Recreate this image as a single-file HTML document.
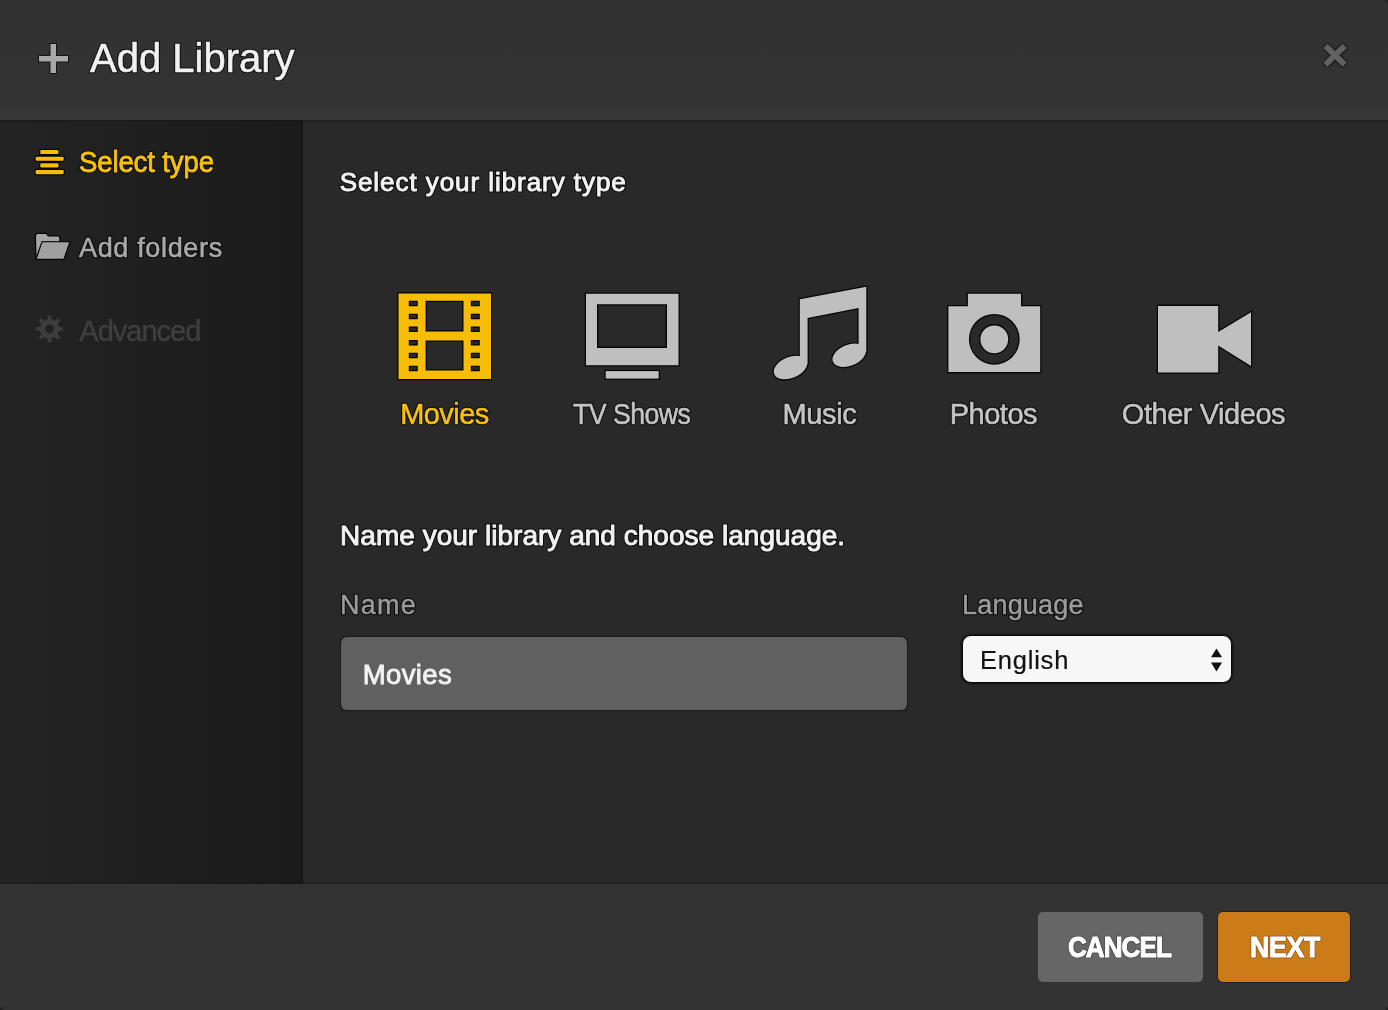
<!DOCTYPE html>
<html>
<head>
<meta charset="utf-8">
<style>
html,body{margin:0;padding:0;width:1388px;height:1010px;overflow:hidden;background:#292929;}
body{position:relative;font-family:"Liberation Sans",sans-serif;}
.abs{position:absolute;white-space:nowrap;line-height:1;}
#header{position:absolute;left:0;top:0;width:1388px;height:120px;background:linear-gradient(#323232 0%,#333 85%,#363636 95%,#363636 100%);}
#hline{position:absolute;left:0;top:120px;width:1388px;height:2px;background:rgba(0,0,0,.15);}
#sidebar{position:absolute;left:0;top:120px;width:303px;height:764px;background:linear-gradient(90deg,#242424 0%,#202020 40%,#1b1b1b 100%);}
#sline{position:absolute;left:301px;top:120px;width:2px;height:764px;background:rgba(0,0,0,.12);}
#main{position:absolute;left:303px;top:120px;width:1085px;height:764px;background:#292929;}
#footer{position:absolute;left:0;top:884px;width:1388px;height:126px;background:#333333;}
#fline{position:absolute;left:0;top:882px;width:1388px;height:2px;background:rgba(0,0,0,.15);}
.sh{text-shadow:0 0 1px #000,0 0 1px #000,0 0 2px rgba(0,0,0,.7);}
</style>
</head>
<body>
<div id="header"></div>
<div id="sidebar"></div>
<div id="main"></div>
<div id="footer"></div>
<div id="hline"></div>
<div id="sline"></div>
<div id="fline"></div>

<svg class="abs" style="left:0;top:0" width="1388" height="1010">
  <defs>
    <filter id="ol" x="-10%" y="-10%" width="120%" height="120%">
      <feMorphology in="SourceAlpha" operator="dilate" radius="1.3" result="d"/>
      <feGaussianBlur in="d" stdDeviation="0.5" result="db"/>
      <feFlood flood-color="#000" flood-opacity="0.85"/>
      <feComposite in2="db" operator="in" result="s"/>
      <feMerge><feMergeNode in="s"/><feMergeNode in="SourceGraphic"/></feMerge>
    </filter>
    <filter id="ol2" x="-20%" y="-20%" width="140%" height="140%">
      <feMorphology in="SourceAlpha" operator="dilate" radius="1" result="d"/>
      <feGaussianBlur in="d" stdDeviation="1" result="db"/>
      <feFlood flood-color="#000" flood-opacity="0.45"/>
      <feComposite in2="db" operator="in" result="s"/>
      <feMerge><feMergeNode in="s"/><feMergeNode in="SourceGraphic"/></feMerge>
    </filter>
    <filter id="gb" x="-30%" y="-30%" width="160%" height="160%">
      <feGaussianBlur in="SourceGraphic" stdDeviation="0.6"/>
    </filter>
  </defs>
  <!-- plus -->
  <g stroke="#000" stroke-opacity="0.6" stroke-width="2" paint-order="stroke" fill="#a8a8a8">
  <path d="M50.5 44 H56 V56 H68 V61.5 H56 V73 H50.5 V61.5 H39 V56 H50.5 Z"/>
  </g>
  <!-- close -->
  <g stroke="#626262" stroke-width="5.4" filter="url(#ol2)">
    <line x1="1325.5" y1="46" x2="1344.5" y2="64.5"/>
    <line x1="1344.5" y1="46" x2="1325.5" y2="64.5"/>
  </g>
  <!-- sidebar icons -->
  <g fill="#f7bc05" stroke="#000" stroke-opacity="0.85" stroke-width="2.6" paint-order="stroke">
    <rect x="40.3" y="150" width="18.2" height="4.1" rx="1.2"/>
    <rect x="35.6" y="156.7" width="28.1" height="4.1" rx="1.2"/>
    <rect x="40.3" y="163.3" width="18.2" height="4.1" rx="1.2"/>
    <rect x="35.6" y="170.1" width="28.1" height="4.2" rx="1.2"/>
  </g>
  <g fill="#a6a6a6" stroke="#000" stroke-opacity="0.85" stroke-width="2.6" paint-order="stroke">
    <path d="M36 236 Q36 234 38 234 L46 234 L48 236.6 L58 236.6 Q59.2 236.6 59.2 238 L59.2 242 L42.5 242 L36.5 256 Z"/>
  </g>
  <g fill="#a0a0a0" stroke="#000" stroke-opacity="0.85" stroke-width="2.6" paint-order="stroke">
    <path d="M42.5 242.3 L69.2 242.3 L63.5 258.7 L36.8 258.7 Z"/>
  </g>
  <g fill="#3d3d3d" filter="url(#gb)">
    <path fill-rule="evenodd" d="M58.87 326.70 L62.90 327.18 L62.90 330.42 L58.87 330.90 L57.61 333.94 L60.12 337.13 L57.83 339.42 L54.64 336.91 L51.60 338.17 L51.12 342.20 L47.88 342.20 L47.40 338.17 L44.36 336.91 L41.17 339.42 L38.88 337.13 L41.39 333.94 L40.13 330.90 L36.10 330.42 L36.10 327.18 L40.13 326.70 L41.39 323.66 L38.88 320.47 L41.17 318.18 L44.36 320.69 L47.40 319.43 L47.88 315.40 L51.12 315.40 L51.60 319.43 L54.64 320.69 L57.83 318.18 L60.12 320.47 L57.61 323.66 Z M53.90 328.80 A4.4 4.4 0 1 0 45.10 328.80 A4.4 4.4 0 1 0 53.90 328.80 Z"/>
  </g>
  <!-- film -->
  <g stroke="#000" stroke-opacity="0.85" stroke-width="2.6" paint-order="stroke">
  <path fill="#f7bc05" fill-rule="evenodd" d="M398.5 293.5 H491 V379 H398.5 Z
    M425.6 300.8 H463.5 V331.5 H425.6 Z M425.6 340.4 H463.5 V370.6 H425.6 Z
    M408.8 300.8 h9 v5.5 h-9 Z M408.8 313.7 h9 v5.5 h-9 Z M408.8 326.6 h9 v5.5 h-9 Z
    M408.8 340 h9 v5.5 h-9 Z M408.8 352.8 h9 v5.5 h-9 Z M408.8 365.7 h9 v5.5 h-9 Z
    M470.8 300.8 h9 v5.5 h-9 Z M470.8 313.7 h9 v5.5 h-9 Z M470.8 326.6 h9 v5.5 h-9 Z
    M470.8 340 h9 v5.5 h-9 Z M470.8 352.8 h9 v5.5 h-9 Z M470.8 365.7 h9 v5.5 h-9 Z"/>
  </g>
  <!-- tv -->
  <g stroke="#000" stroke-opacity="0.85" stroke-width="2.6" paint-order="stroke" fill="#bfbfbf">
  <path fill-rule="evenodd" d="M586 293.7 H678.5 V365.2 H586 Z M597 304.3 H667 V347.9 H597 Z"/>
  <rect x="605.7" y="371.1" width="53" height="7.5"/>
  </g>
  <!-- music -->
  <g stroke="#000" stroke-opacity="0.85" stroke-width="2.6" fill="#000">
  <path d="M799.8 299.2 L866.3 286.8 L866.3 352 L858.6 352 L858.6 307.9 L807.6 317.9 L807.6 364 L799.8 364 Z"/>
  <ellipse cx="790.5" cy="367.6" rx="17.5" ry="10.5" transform="rotate(-22 790.5 367.6)"/>
  <ellipse cx="849.2" cy="355.2" rx="17.5" ry="10.5" transform="rotate(-22 849.2 355.2)"/>
  </g>
  <g fill="#bfbfbf">
  <path d="M799.8 299.2 L866.3 286.8 L866.3 352 L858.6 352 L858.6 307.9 L807.6 317.9 L807.6 364 L799.8 364 Z"/>
  <ellipse cx="790.5" cy="367.6" rx="17.5" ry="10.5" transform="rotate(-22 790.5 367.6)"/>
  <ellipse cx="849.2" cy="355.2" rx="17.5" ry="10.5" transform="rotate(-22 849.2 355.2)"/>
  </g>
  <!-- camera -->
  <g stroke="#000" stroke-opacity="0.85" stroke-width="2.6" paint-order="stroke">
  <path fill="#bfbfbf" fill-rule="evenodd" d="M948.4 306.3 H967.9 V293.7 H1021 V306.3 H1040.2 V372.1 H948.4 Z
     M994.3 313.9 A25.4 25.4 0 1 0 994.3 364.7 A25.4 25.4 0 1 0 994.3 313.9 Z M994.3 325.4 A13.9 13.9 0 1 0 994.3 353.2 A13.9 13.9 0 1 0 994.3 325.4 Z"/>
  </g>
  <!-- video -->
  <g stroke="#000" stroke-opacity="0.85" stroke-width="2.6" paint-order="stroke" fill="#bfbfbf">
  <path d="M1158 305.9 H1218.2 V332 L1251 312.3 V366.1 L1218.2 345.5 V372.4 H1158 Z"/>
  </g>
</svg>
<div class="abs" style="left:90.0px;top:38.0px;font-size:40px;font-weight:400;letter-spacing:0.0px;transform:translateZ(0);color:rgba(0,0,0,0.8);-webkit-text-stroke:2.60px rgba(0,0,0,0.8);filter:blur(0.3px)">Add Library</div>
<div class="abs" style="left:90.0px;top:38.0px;font-size:40px;font-weight:400;letter-spacing:0.0px;transform:translateZ(0);color:#f1f1f1;-webkit-text-stroke:0.6px #f1f1f1;">Add Library</div>
<div class="abs" style="left:78.8px;top:148.4px;font-size:29px;font-weight:400;letter-spacing:-0.14px;transform:scaleX(0.95);transform-origin:0 0;color:rgba(0,0,0,0.8);-webkit-text-stroke:2.90px rgba(0,0,0,0.8);filter:blur(0.3px)">Select type</div>
<div class="abs" style="left:78.8px;top:148.4px;font-size:29px;font-weight:400;letter-spacing:-0.14px;transform:scaleX(0.95);transform-origin:0 0;color:#f5c012;-webkit-text-stroke:0.9px #f5c012;">Select type</div>
<div class="abs" style="left:79.0px;top:234.7px;font-size:27px;font-weight:400;letter-spacing:0.66px;transform:translateZ(0);color:rgba(0,0,0,0.8);-webkit-text-stroke:2.60px rgba(0,0,0,0.8);filter:blur(0.3px)">Add folders</div>
<div class="abs" style="left:79.0px;top:234.7px;font-size:27px;font-weight:400;letter-spacing:0.66px;transform:translateZ(0);color:#a9a9a9;-webkit-text-stroke:0.6px #a9a9a9;">Add folders</div>
<div class="abs" style="left:79.3px;top:316.5px;font-size:29px;font-weight:400;letter-spacing:-1.0px;transform:translateZ(0);color:#3f3f3f;-webkit-text-stroke:0.4px #3f3f3f;">Advanced</div>
<div class="abs" style="left:339.7px;top:169.3px;font-size:26px;font-weight:400;letter-spacing:0.94px;transform:translateZ(0);color:rgba(0,0,0,0.8);-webkit-text-stroke:3.00px rgba(0,0,0,0.8);filter:blur(0.3px)">Select your library type</div>
<div class="abs" style="left:339.7px;top:169.3px;font-size:26px;font-weight:400;letter-spacing:0.94px;transform:translateZ(0);color:#f2f2f2;-webkit-text-stroke:1.0px #f2f2f2;">Select your library type</div>
<div class="abs" style="left:400.2px;top:400.1px;font-size:29px;font-weight:400;letter-spacing:-0.56px;transform:translateZ(0);color:rgba(0,0,0,0.8);-webkit-text-stroke:2.60px rgba(0,0,0,0.8);filter:blur(0.3px)">Movies</div>
<div class="abs" style="left:400.2px;top:400.1px;font-size:29px;font-weight:400;letter-spacing:-0.56px;transform:translateZ(0);color:#f5c012;-webkit-text-stroke:0.6px #f5c012;">Movies</div>
<div class="abs" style="left:573.4px;top:400.1px;font-size:29px;font-weight:400;letter-spacing:-0.57px;transform:scaleX(0.92);transform-origin:0 0;color:rgba(0,0,0,0.8);-webkit-text-stroke:2.60px rgba(0,0,0,0.8);filter:blur(0.3px)">TV Shows</div>
<div class="abs" style="left:573.4px;top:400.1px;font-size:29px;font-weight:400;letter-spacing:-0.57px;transform:scaleX(0.92);transform-origin:0 0;color:#c4c4c4;-webkit-text-stroke:0.6px #c4c4c4;">TV Shows</div>
<div class="abs" style="left:782.5px;top:400.1px;font-size:29px;font-weight:400;letter-spacing:-0.38px;transform:translateZ(0);color:rgba(0,0,0,0.8);-webkit-text-stroke:2.60px rgba(0,0,0,0.8);filter:blur(0.3px)">Music</div>
<div class="abs" style="left:782.5px;top:400.1px;font-size:29px;font-weight:400;letter-spacing:-0.38px;transform:translateZ(0);color:#c4c4c4;-webkit-text-stroke:0.6px #c4c4c4;">Music</div>
<div class="abs" style="left:949.7px;top:400.1px;font-size:29px;font-weight:400;letter-spacing:-0.48px;transform:translateZ(0);color:rgba(0,0,0,0.8);-webkit-text-stroke:2.60px rgba(0,0,0,0.8);filter:blur(0.3px)">Photos</div>
<div class="abs" style="left:949.7px;top:400.1px;font-size:29px;font-weight:400;letter-spacing:-0.48px;transform:translateZ(0);color:#c4c4c4;-webkit-text-stroke:0.6px #c4c4c4;">Photos</div>
<div class="abs" style="left:1121.8px;top:400.1px;font-size:29px;font-weight:400;letter-spacing:-0.45px;transform:translateZ(0);color:rgba(0,0,0,0.8);-webkit-text-stroke:2.60px rgba(0,0,0,0.8);filter:blur(0.3px)">Other Videos</div>
<div class="abs" style="left:1121.8px;top:400.1px;font-size:29px;font-weight:400;letter-spacing:-0.45px;transform:translateZ(0);color:#c4c4c4;-webkit-text-stroke:0.6px #c4c4c4;">Other Videos</div>
<div class="abs" style="left:340.1px;top:522.3px;font-size:28px;font-weight:400;letter-spacing:0.02px;transform:translateZ(0);color:rgba(0,0,0,0.8);-webkit-text-stroke:3.00px rgba(0,0,0,0.8);filter:blur(0.3px)">Name your library and choose language.</div>
<div class="abs" style="left:340.1px;top:522.3px;font-size:28px;font-weight:400;letter-spacing:0.02px;transform:translateZ(0);color:#f2f2f2;-webkit-text-stroke:1.0px #f2f2f2;">Name your library and choose language.</div>
<div class="abs" style="left:340.0px;top:592.4px;font-size:27px;font-weight:400;letter-spacing:1.27px;transform:translateZ(0);color:rgba(0,0,0,0.8);-webkit-text-stroke:2.50px rgba(0,0,0,0.8);filter:blur(0.3px)">Name</div>
<div class="abs" style="left:340.0px;top:592.4px;font-size:27px;font-weight:400;letter-spacing:1.27px;transform:translateZ(0);color:#9c9c9c;-webkit-text-stroke:0.5px #9c9c9c;">Name</div>
<div class="abs" style="left:962.0px;top:592.2px;font-size:27px;font-weight:400;letter-spacing:0.2px;transform:translateZ(0);color:rgba(0,0,0,0.8);-webkit-text-stroke:2.50px rgba(0,0,0,0.8);filter:blur(0.3px)">Language</div>
<div class="abs" style="left:962.0px;top:592.2px;font-size:27px;font-weight:400;letter-spacing:0.2px;transform:translateZ(0);color:#9c9c9c;-webkit-text-stroke:0.5px #9c9c9c;">Language</div>
<div class="abs" style="left:340.8px;top:636.8px;width:565.8px;height:72.8px;border-radius:6px;background:#606060;box-shadow:0 0 1.5px 0.5px rgba(0,0,0,.45)"></div>
<div class="abs" style="left:362.7px;top:660.9px;font-size:27.5px;font-weight:400;letter-spacing:0.38px;transform:translateZ(0);color:#f2f2f2;-webkit-text-stroke:0.9px #f2f2f2;text-shadow:0 0 1px rgba(0,0,0,.4);">Movies</div>
<div class="abs" style="left:961.5px;top:635px;width:268.5px;height:46px;border-radius:9px;background:#f7f7f7;border:1.6px solid #0a0a0a;box-shadow:0 0 1.5px 0.6px rgba(0,0,0,.55)"></div>
<div class="abs" style="left:979.9px;top:647.8px;font-size:25.5px;font-weight:400;letter-spacing:0.8px;transform:translateZ(0);color:#111;-webkit-text-stroke:0.2px #111;">English</div>
<svg class="abs" style="left:1205px;top:645px" width="24" height="30">
  <path d="M6 12.2 L11.5 3.5 L17 12.2 Z M6 17.4 L17 17.4 L11.5 26.5 Z" fill="#111"/>
</svg>
<div class="abs" style="left:1037.8px;top:912.3px;width:165.7px;height:69.4px;border-radius:5px;background:#666"></div>
<div class="abs" style="left:1218.2px;top:912.4px;width:131.8px;height:69.3px;border-radius:5px;background:#cc7b19;box-shadow:0 0 0 1px rgba(0,0,0,.35)"></div>
<div class="abs" style="left:1067.9px;top:932.9px;font-size:29px;font-weight:700;letter-spacing:-1.09px;transform:scaleX(0.9);transform-origin:0 0;color:rgba(0,0,0,0.3);-webkit-text-stroke:2.60px rgba(0,0,0,0.3);filter:blur(0.3px)">CANCEL</div>
<div class="abs" style="left:1067.9px;top:932.9px;font-size:29px;font-weight:700;letter-spacing:-1.09px;transform:scaleX(0.9);transform-origin:0 0;color:#fff;-webkit-text-stroke:1.0px #fff;">CANCEL</div>
<div class="abs" style="left:1249.5px;top:933.1px;font-size:29px;font-weight:700;letter-spacing:-0.29px;transform:scaleX(0.92);transform-origin:0 0;color:rgba(0,0,0,0.3);-webkit-text-stroke:2.60px rgba(0,0,0,0.3);filter:blur(0.3px)">NEXT</div>
<div class="abs" style="left:1249.5px;top:933.1px;font-size:29px;font-weight:700;letter-spacing:-0.29px;transform:scaleX(0.92);transform-origin:0 0;color:#fff;-webkit-text-stroke:1.0px #fff;">NEXT</div>
<div class="abs" style="left:1384px;top:0;width:4px;height:4px;background:radial-gradient(circle at 100% 0,#222 0,#222 1.5px,rgba(34,34,34,0) 4px)"></div><div class="abs" style="left:1384px;top:1006px;width:4px;height:4px;background:radial-gradient(circle at 100% 100%,#222 0,#222 1.5px,rgba(34,34,34,0) 4px)"></div><div class="abs" style="left:0;top:1006px;width:4px;height:4px;background:radial-gradient(circle at 0 100%,#222 0,#222 1.5px,rgba(34,34,34,0) 4px)"></div>
</body>
</html>
